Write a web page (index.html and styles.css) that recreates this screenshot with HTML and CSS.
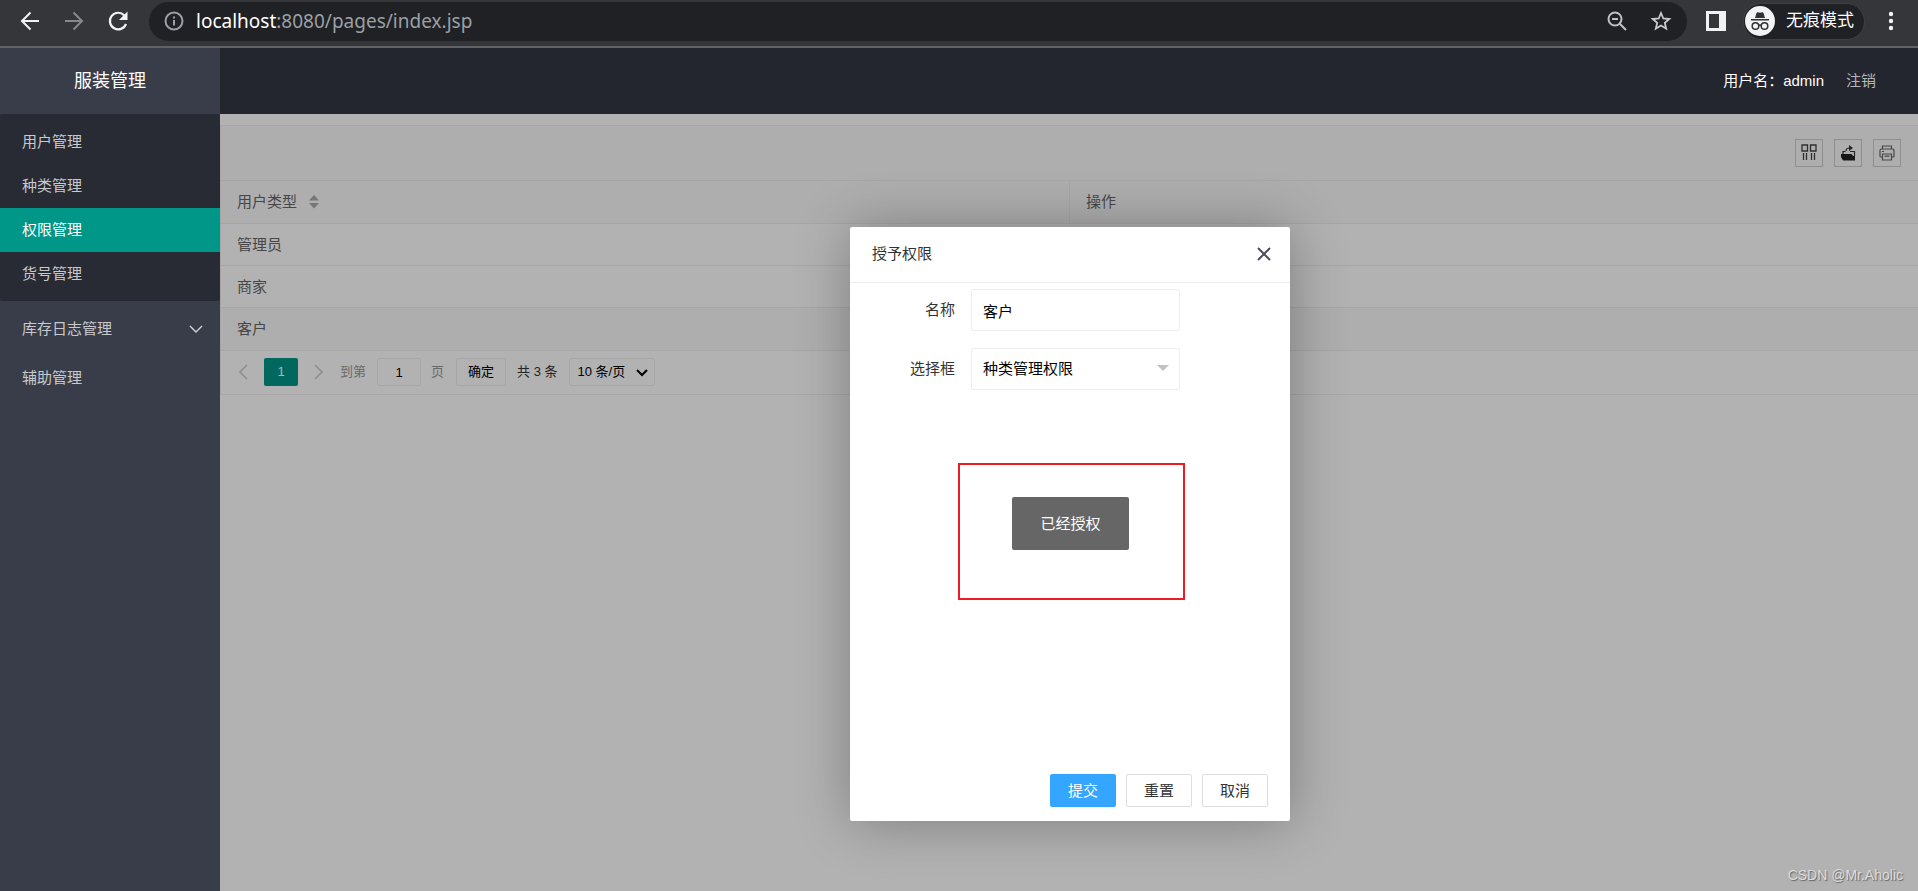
FILE: index.html
```html
<!DOCTYPE html>
<html lang="zh-CN">
<head>
<meta charset="utf-8">
<title>服装管理</title>
<link rel="stylesheet" href="styles.css">
</head>
<body>
<div class="browser">
  <button class="tool" aria-label="后退"><svg width="24" height="24" viewBox="0 0 24 24" fill="none" stroke="#f1f3f4" stroke-width="2"><path d="M21 12H4M12.500 3.500 4 12l8.500 8.500"/></svg></button>
  <button class="tool" aria-label="前进"><svg width="24" height="24" viewBox="0 0 24 24" fill="none" stroke="#86888b" stroke-width="2"><path d="M3 12h17M11.500 3.500 20 12l-8.500 8.500"/></svg></button>
  <button class="tool" aria-label="重新加载"><svg width="24" height="24" viewBox="0 0 24 24"><path d="M20 15A8.300 8.300 0 1 1 18.300 6.400" fill="none" stroke="#f1f3f4" stroke-width="2.200"/><path d="M21.500 2.500v8.500H13z" fill="#f1f3f4"/></svg></button>
  <div class="omnibox">
    <svg width="20" height="20" viewBox="0 0 20 20" fill="none" stroke="#9aa0a6" stroke-width="2"><circle cx="10" cy="10" r="8.500"/><path d="M10 9v5.500M10 5.500v2"/></svg>
    <span class="url"><b>localhost</b>:8080/pages/index.jsp</span>
    <button class="tool" aria-label="缩放"><svg width="22" height="22" viewBox="0 0 22 22" fill="none" stroke="#bfc2c5" stroke-width="2"><circle cx="9" cy="9" r="6.500"/><path d="m13.500 13.500 6.500 6.500M6 9h6"/></svg></button>
    <button class="tool" aria-label="收藏"><svg width="22" height="22" viewBox="0 0 22 22" fill="none" stroke="#c8cacd" stroke-width="1.800"><path d="m11 3 2.300 5.500 6 .5-4.500 3.900 1.400 5.800L11 15.600l-5.200 3.100 1.400-5.800L2.700 9l6-.5z"/></svg></button>
  </div>
  <button class="tool side" aria-label="侧边栏"><svg width="20" height="20" viewBox="0 0 20 20"><path fill="#f1f3f4" fill-rule="evenodd" d="M0 0h20v20H0zM3 3v14h10V3z"/></svg></button>
  <div class="incognito">
    <svg width="30" height="30" viewBox="0 0 30 30"><circle cx="15" cy="15" r="15" fill="#f1f3f4"/><path fill="#303134" d="M10 12 11.500 7q.5-1 1.500-.7l2 .5 2-.5q1-.3 1.500.7L20 12zM6 13h18v1.500H6z"/><g fill="none" stroke="#303134" stroke-width="1.500"><circle cx="10.500" cy="20" r="3.300"/><circle cx="19.500" cy="20" r="3.300"/><path d="M13.500 19.500q1.500-1 3 0"/></g></svg>
    <span>无痕模式</span>
  </div>
  <button class="tool" aria-label="菜单"><svg width="20" height="20" viewBox="0 0 20 20" fill="#f1f3f4"><circle cx="10" cy="3" r="2.200"/><circle cx="10" cy="10" r="2.200"/><circle cx="10" cy="17" r="2.200"/></svg></button>
</div>
<div class="app">
  <aside class="sidebar">
    <h1 class="brand">服装管理</h1>
    <nav>
      <div class="submenu">
        <a href="#">用户管理</a>
        <a href="#">种类管理</a>
        <a href="#" class="active">权限管理</a>
        <a href="#">货号管理</a>
      </div>
      <div class="menu">
        <a href="#">库存日志管理<svg width="14" height="10" viewBox="0 0 14 10" fill="none" stroke="#d0d2d5" stroke-width="1.400"><path d="m1 2 6 6 6-6"/></svg></a>
        <a href="#">辅助管理</a>
      </div>
    </nav>
  </aside>
  <div class="column">
    <header class="topbar"><span>用户名：admin</span><a href="#">注销</a></header>
    <main class="content">
      <section class="panel">
        <div class="toolbar">
          <button aria-label="筛选列"><svg width="18" height="18" viewBox="0 0 18 18" fill="none" stroke="#444" stroke-width="1.300"><path d="M2 1h5.500v6H2zM10.500 1H16v6h-5.500zM3.500 9v7M6.500 9v7M11.500 9v7M14.500 9v7"/></svg></button>
          <button aria-label="导出"><svg width="18" height="18" viewBox="0 0 18 18"><path fill="#222" d="M2 10h10.500l1.500 2h2v4.500H4L2 13z"/><path fill="none" stroke="#333" stroke-width="1.200" d="M4 10V7.500h2.500M11 7.500h4.500V12M7 7Q7 4 11 4"/><path fill="#333" d="m10 1 4 3-4 3z"/></svg></button>
          <button aria-label="打印"><svg width="18" height="18" viewBox="0 0 18 18" fill="none" stroke="#666" stroke-width="1.200"><path d="M4.500 5V2h9v3M4.500 13H2.600Q2 13 2 12V6.500Q2 5 3.500 5h11Q16 5 16 6.500V12q0 1-.6 1h-1.900M4.500 10h9v6h-9zM4 7.500h2M6.500 12.200h5"/></svg></button>
        </div>
        <table>
          <thead><tr><th>用户类型<svg class="sort" width="10" height="14" viewBox="0 0 10 14" fill="#aaa"><path d="m5 0 5 5.500H0zM0 8h10l-5 5.500z"/></svg></th><th>操作</th></tr></thead>
          <tbody>
            <tr><td>管理员</td><td></td></tr>
            <tr><td>商家</td><td></td></tr>
            <tr class="hover"><td>客户</td><td></td></tr>
          </tbody>
        </table>
        <div class="pager">
          <button class="page" aria-label="上一页"><svg width="10" height="16" viewBox="0 0 10 16" fill="none" stroke="#ccc" stroke-width="1.600"><path d="M9 1 2 8l7 7"/></svg></button>
          <button class="page current">1</button>
          <button class="page" aria-label="下一页"><svg width="10" height="16" viewBox="0 0 10 16" fill="none" stroke="#ccc" stroke-width="1.600"><path d="m1 1 7 7-7 7"/></svg></button>
          <label for="goto">到第</label>
          <input id="goto" value="1">
          <label for="goto">页</label>
          <button class="go">确定</button>
          <span class="total">共 3 条</span>
          <div class="limit">
            <select aria-label="每页条数"><option>10 条/页</option></select>
            <svg width="12" height="8" viewBox="0 0 12 8" fill="none" stroke="#000" stroke-width="2"><path d="m1 1 5 5 5-5"/></svg>
          </div>
        </div>
      </section>
      <div class="shade"></div>
      <form class="dialog">
        <div class="dialog-head"><h2>授予权限</h2><button type="button" aria-label="关闭"><svg width="14" height="14" viewBox="0 0 14 14" fill="none" stroke="#4b4a5a" stroke-width="2"><path d="m1 1 12 12M13 1 1 13"/></svg></button></div>
        <div class="fields">
          <div class="field"><label for="name">名称</label><input id="name" value="客户"></div>
          <div class="field"><label for="right">选择框</label><div class="pick"><select id="right"><option>种类管理权限</option></select><svg width="12" height="6" viewBox="0 0 12 6" fill="#c2c2c2"><path d="M0 0h12L6 6z"/></svg></div></div>
        </div>
        <div class="actions"><button type="button" class="primary">提交</button><button type="button">重置</button><button type="button">取消</button></div>
      </form>
      <div class="marker"><div class="toast" role="alert">已经授权</div></div>
      <div class="credit">CSDN @Mr.Aholic</div>
    </main>
  </div>
</div>
</body>
</html>
```
FILE: styles.css
```css
* { box-sizing: border-box; }
body {
  margin: 0;
  min-height: 100vh;
  display: flex;
  flex-direction: column;
  font: 15px/24px "Liberation Sans", "Noto Sans CJK SC", sans-serif;
  color: #333;
}
button, input, select { font: inherit; color: inherit; margin: 0; }
button { padding: 0; border: 0; background: none; cursor: pointer; }
a { color: inherit; text-decoration: none; }
h1, h2 { margin: 0; font-weight: 400; }
svg { display: block; flex: none; }

.browser {
  display: flex;
  align-items: center;
  height: 48px;
  padding: 0 17px 4px 18px;
  background: #35363a;
  border-bottom: 2px solid #606164;
}
.tool { flex: none; margin-right: 20px; }
.tool:last-child { margin: 0; }
.omnibox {
  flex: 1;
  display: flex;
  align-items: center;
  height: 39px;
  margin-left: -1px;
  padding-left: 15px;
  border-radius: 20px;
  background: #202124;
}
.omnibox .tool { margin-right: 22px; }
.omnibox .tool:last-child { margin-right: 15px; }
.url {
  flex: 1;
  margin-left: 12px;
  font: 19px/26px "Noto Sans", sans-serif;
  color: #9aa0a6;
}
.url b { font-weight: 400; color: #fff; }
.side { margin: 0 17px 0 19px; }
.incognito {
  display: flex;
  align-items: center;
  gap: 11px;
  height: 37px;
  margin-right: 16px;
  padding: 0 10px 0 1px;
  border: 1px solid #3f4044;
  border-radius: 19px;
  background: #202124;
  color: #fff;
  font-size: 17px;
}

.app { flex: 1; display: flex; }
.sidebar { width: 220px; flex: none; background: #393d49; color: #c8c9cc; }
.brand {
  height: 66px;
  line-height: 66px;
  text-align: center;
  font-size: 18px;
  color: #fff;
}
.submenu { padding: 6px 0 5px; border-radius: 2px; background: #282b33; }
.submenu a, .menu a { display: flex; align-items: center; height: 44px; padding: 0 17px 0 22px; }
.submenu .active { background: #009688; color: #fff; }
.menu { padding-top: 3px; }
.menu a { height: 49px; justify-content: space-between; }

.column { flex: 1; display: flex; flex-direction: column; }
.topbar {
  display: flex;
  align-items: center;
  justify-content: flex-end;
  gap: 22px;
  height: 66px;
  padding-right: 42px;
  background: #23262e;
  color: #fff;
}
.topbar a { color: #b4b5b8; }
.content { position: relative; flex: 1; padding-top: 11px; background: #fff; }
.panel { border: 1px solid #eee; border-right: 0; color: #666; }
.toolbar {
  display: flex;
  justify-content: flex-end;
  align-items: center;
  gap: 11px;
  height: 54px;
  padding-right: 17px;
  background: #fafafa;
}
.toolbar button { display: grid; place-items: center; width: 28px; height: 28px; border: 1px solid #ccc; }
table { width: 100%; border-collapse: collapse; table-layout: fixed; }
th, td { height: 42px; padding: 0 16px; text-align: left; font-weight: 400; border-top: 1px solid #eee; }
th { height: 43px; background: #fafafa; }
th:first-child { border-right: 1px solid #eee; }
.hover td { background: #fafafa; }
.sort { display: inline-block; margin-left: 12px; vertical-align: -2px; }
.pager {
  display: flex;
  align-items: center;
  height: 44px;
  padding-left: 5px;
  border-top: 1px solid #eee;
  font-size: 13px;
  color: #999;
}
.page { display: grid; place-items: center; width: 34px; height: 28px; margin-right: 4px; border-radius: 2px; }
.current { background: #009688; color: #fff; }
.pager input, .go, .limit select { height: 28px; border: 1px solid #eee; border-radius: 2px; background: #fff; color: #000; }
.pager input { width: 44px; margin: 0 10px 0 11px; padding: 0; text-align: center; }
.go { width: 50px; margin: 0 11px 0 12px; }
.total { color: #333; }
.limit, .pick { position: relative; }
.limit { margin-left: 11px; }
.limit select { width: 86px; padding: 0 8px; }
select { appearance: none; }
.limit svg, .pick svg { position: absolute; right: 7px; top: 11px; pointer-events: none; }

.shade { position: absolute; inset: 0; background: rgba(0, 0, 0, .3); }
.dialog {
  position: absolute;
  top: 113px;
  left: calc(50% - 219px);
  display: flex;
  flex-direction: column;
  width: 440px;
  height: 594px;
  border-radius: 2px;
  background: #fff;
  box-shadow: 1px 1px 55px rgba(0, 0, 0, .3);
}
.dialog-head {
  display: flex;
  align-items: center;
  justify-content: space-between;
  height: 56px;
  padding: 0 19px 2px 22px;
  border-bottom: 1px solid #eee;
}
.dialog-head h2 { font-size: 15px; }
.fields { flex: 1; display: flex; flex-direction: column; gap: 17px; padding-top: 6px; }
.field { display: flex; align-items: center; gap: 16px; }
.field label { width: 105px; text-align: right; }
.field input, .field select {
  width: 209px;
  height: 42px;
  padding: 0 11px;
  border: 1px solid #eee;
  border-radius: 2px;
  background: #fff;
  color: #000;
}
.pick svg { right: 11px; top: 17px; }
.actions { display: flex; justify-content: flex-end; gap: 10px; padding: 0 22px 14px; }
.actions button { width: 66px; height: 33px; border: 1px solid #dedede; border-radius: 2px; background: #fff; }
.actions .primary { border-color: #35a6ff; background: #35a6ff; color: #fff; }
.marker {
  position: absolute;
  top: 349px;
  left: calc(50% - 111px);
  width: 227px;
  padding: 32px 54px 48px 52px;
  border: 2px solid #ed1c24;
}
.toast { height: 53px; line-height: 53px; border-radius: 2px; background: #666; color: #fff; text-align: center; }
.credit {
  position: absolute;
  right: 15px;
  bottom: 4px;
  font-size: 14px;
  color: #dcdcdc;
  text-shadow: 1px 1px 1px #666;
}
```
